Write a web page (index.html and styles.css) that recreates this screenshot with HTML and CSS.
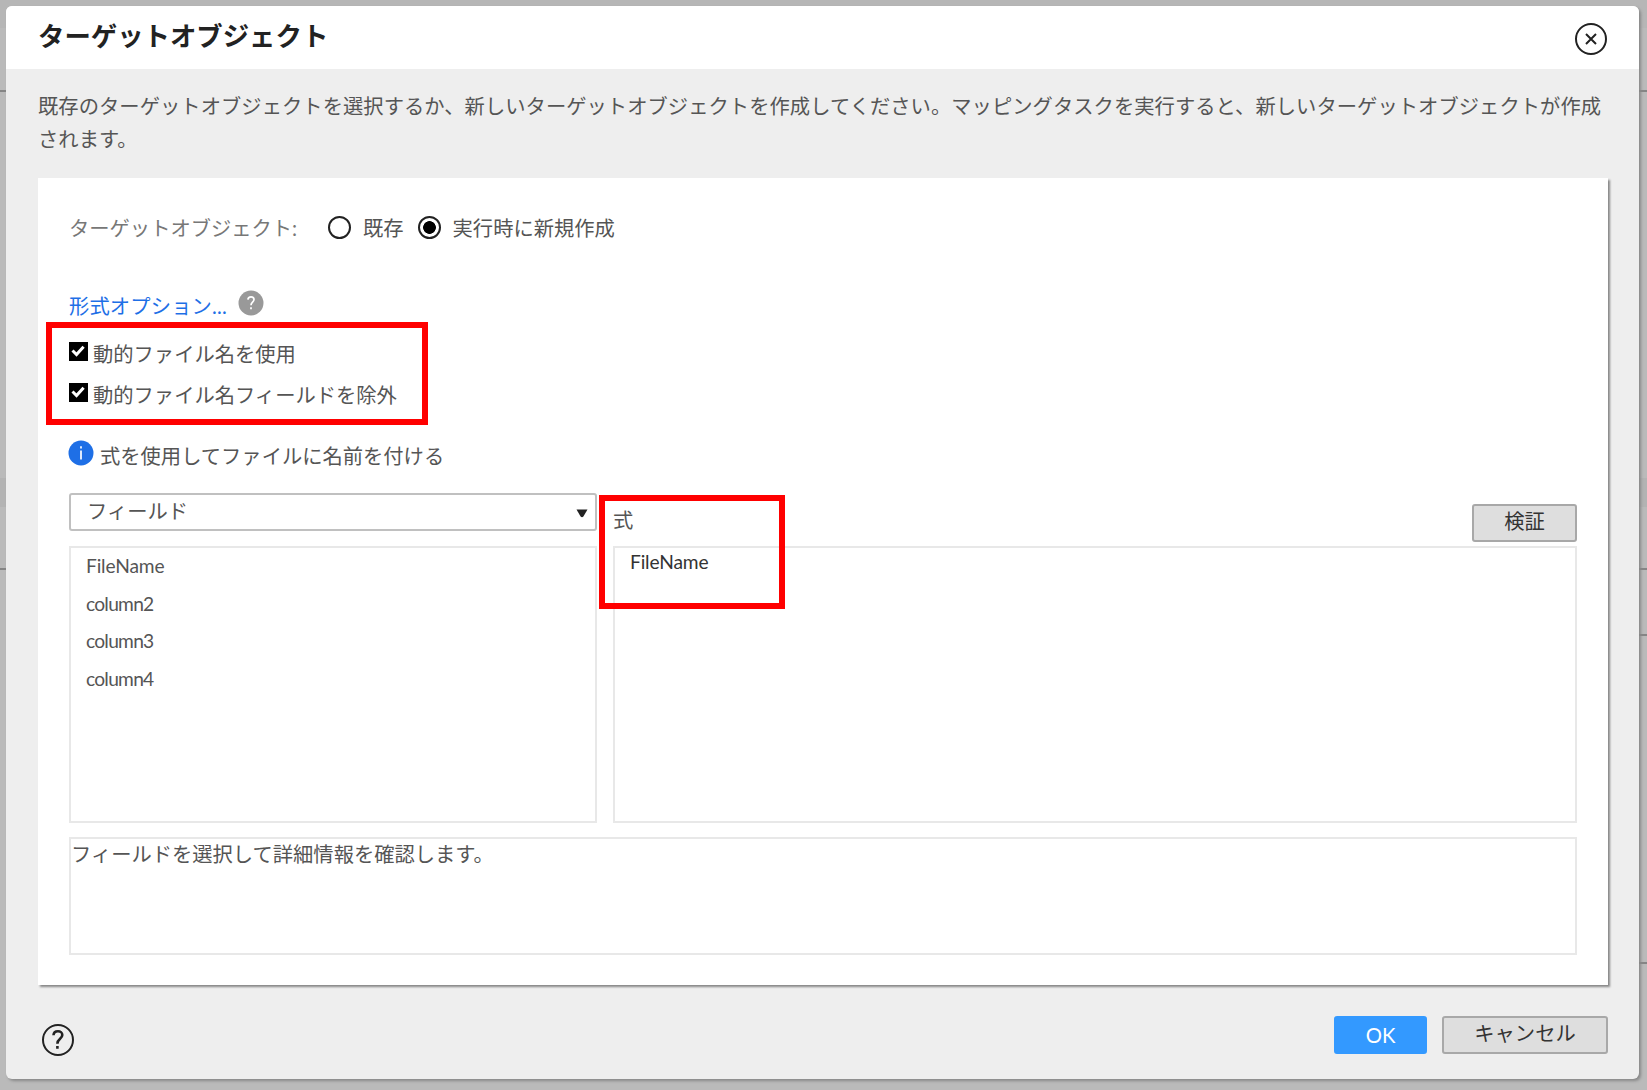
FILE: index.html
```html
<!DOCTYPE html>
<html lang="ja">
<head>
  <meta charset="UTF-8">
  <meta name="viewport" content="width=device-width, initial-scale=1.0">
  <title>ターゲットオブジェクト</title>
  <link rel="stylesheet" href="styles.css">
</head>
<body>
  <div class="dialog">
    <header class="dialog-header">
      <h1>ターゲットオブジェクト</h1>
      <svg class="round-icon" viewBox="0 0 34 34">
        <circle cx="17" cy="17" r="15" />
        <path d="M12 12L22 22M22 12L12 22" />
      </svg>
    </header>

    <p class="intro">既存のターゲットオブジェクトを選択するか、新しいターゲットオブジェクトを作成してください。マッピングタスクを実行すると、新しいターゲットオブジェクトが作成<br>されます。</p>

    <main class="panel">
      <div class="target-row">
        <span class="target-label">ターゲットオブジェクト:</span>
        <label class="radio"><span class="radio-dot"></span>既存</label>
        <label class="radio"><span class="radio-dot checked"></span>実行時に新規作成</label>
      </div>

      <div class="format-row">
        <a href="#">形式オプション...</a>
        <svg class="badge-icon" viewBox="0 0 26 26">
          <circle cx="13" cy="13" r="12.5" fill="#999" />
          <path d="M9.9 9.6C10.2 5.8 16 5.9 16 9.6C16 12.2 13 12.2 13 15.2M13 17.3V19.2" fill="none" stroke="#fff" stroke-width="1.7" />
        </svg>
      </div>

      <div class="checks">
        <label class="check">
          <svg viewBox="0 0 19 19"><rect width="19" height="19" /><path d="M3.5 8.5L7.5 12.5L14.6 4.7" /></svg>
          動的ファイル名を使用
        </label>
        <label class="check">
          <svg viewBox="0 0 19 19"><rect width="19" height="19" /><path d="M3.5 8.5L7.5 12.5L14.6 4.7" /></svg>
          動的ファイル名フィールドを除外
        </label>
        <div class="highlight highlight-checks"></div>
      </div>

      <div class="info-row">
        <svg class="badge-icon" viewBox="0 0 26 26">
          <circle cx="13" cy="13" r="12.5" fill="#1e6fe6" />
          <path d="M13 6.3V8.4M13 10.5V19.5" stroke="#fff" stroke-width="1.7" />
        </svg>
        <span>式を使用してファイルに名前を付ける</span>
      </div>

      <div class="editor">
        <div class="fields">
          <div class="select">
            <span>フィールド</span>
            <svg viewBox="0 0 12 9"><path d="M0.5 0.5H11.5L7.4 7.6Q6 9 4.6 7.6Z" /></svg>
          </div>
          <ul class="box field-list">
            <li>FileName</li>
            <li class="column">column2</li>
            <li class="column">column3</li>
            <li class="column">column4</li>
          </ul>
        </div>
        <div class="expression">
          <div class="expression-head">
            <span>式</span>
            <button class="btn btn-verify">検証</button>
          </div>
          <div class="box expression-text">FileName</div>
          <div class="highlight highlight-expression"></div>
        </div>
      </div>

      <div class="box detail">フィールドを選択して詳細情報を確認します。</div>
    </main>

    <footer class="dialog-footer">
      <svg class="round-icon" viewBox="0 0 34 34">
        <circle cx="17" cy="17" r="15" />
        <path class="question" d="M12.5 12.3C12.8 6.8 21.3 7.2 21.3 12C21.3 16 16.4 15.6 16.4 20.7M16.4 23V25.7" />
      </svg>
      <button class="btn btn-ok">OK</button>
      <button class="btn btn-cancel">キャンセル</button>
    </footer>
  </div>
</body>
</html>
```

FILE: styles.css
```css
* {
  box-sizing: border-box;
}
body {
  margin: 0;
  height: 1090px;
  padding: 6px 8px 11px 6px;
  overflow: hidden;
  /* dimmed page behind the dialog */
  background:
    linear-gradient(#858585, #858585) 0 90px / 100% 2px no-repeat,
    linear-gradient(#858585, #858585) 0 568px / 100% 2px no-repeat,
    linear-gradient(#858585, #858585) 100% 634px / 9px 2px no-repeat,
    linear-gradient(#858585, #858585) 100% 962px / 9px 2px no-repeat,
    linear-gradient(#b3b3b3, #b3b3b3) 0 478px / 100% 29px no-repeat,
    linear-gradient(#b6b6b6, #b6b6b6) 0 0 / 100% 28px no-repeat,
    #bababa;
  font-family: Lato, "Noto Sans CJK JP", sans-serif;
  font-size: 20.3px;
  line-height: 32px;
  color: #555;
}
.dialog {
  height: 1073px;
  display: flex;
  flex-direction: column;
  background: #eee;
  border-radius: 6px;
  box-shadow: 2px 2px 3px #888;
  overflow: hidden;
}
.dialog-header {
  height: 63px;
  flex: none;
  display: flex;
  justify-content: space-between;
  align-items: center;
  padding: 2px 31px 0 32px;
  background: #fff;
}
h1 {
  margin: -5px 0 0;
  font-size: 26.4px;
  color: #222;
}
.round-icon {
  width: 34px;
  height: 34px;
  fill: none;
  stroke: #222;
  stroke-width: 2;
}
.round-icon .question {
  stroke-width: 2.6;
}
.intro {
  flex: none;
  margin: 0;
  padding: 21px 0 0 32px;
  height: 109px;
  line-height: 33px;
  letter-spacing: 0.05px;
  white-space: nowrap;
}
.panel {
  width: 1570px;
  height: 807px;
  flex: none;
  margin-left: 32px;
  padding: 34px 31px 0;
  background: #fff;
  box-shadow: 2px 2px 2px #888;
}
.target-row {
  display: flex;
  align-items: center;
}
.target-label {
  width: 259px;
  color: #777;
}
.radio {
  display: flex;
  align-items: center;
  margin-right: 14px;
}
.radio-dot {
  width: 23px;
  height: 23px;
  margin: -1px 12px 0 0;
  border: 2px solid #222;
  border-radius: 50%;
}
.radio-dot.checked {
  background: radial-gradient(circle, #000 6px, transparent 6.7px);
}
.format-row {
  display: flex;
  margin-top: 46px;
  height: 32px;
}
.format-row a {
  width: 169px;
  letter-spacing: 0.15px;
  color: #1e6fe6;
  text-decoration: none;
}
.badge-icon {
  width: 26px;
  height: 26px;
}
.checks {
  position: relative;
  margin-top: 16px;
}
.check {
  display: flex;
  height: 40.5px;
}
.check svg {
  width: 19px;
  height: 19px;
  margin: 4px 5px 0 0;
}
.check path {
  fill: none;
  stroke: #fff;
  stroke-width: 3;
}
.info-row {
  display: flex;
  gap: 6px;
  margin-top: 21px;
  height: 34px;
}
.info-row .badge-icon {
  margin-left: -1px;
}
.highlight {
  position: absolute;
  border: 6px solid #f00;
}
.highlight-checks {
  left: -23px;
  top: -16px;
  width: 382px;
  height: 103px;
}
.highlight-expression {
  left: -14px;
  top: 2px;
  width: 186px;
  height: 114px;
}
.editor {
  display: flex;
  gap: 16px;
  margin-top: 19px;
}
.fields {
  width: 528px;
}
.select {
  height: 38px;
  display: flex;
  justify-content: space-between;
  padding: 0 7px 0 16px;
  border: 2px solid #c0c0c0;
  border-radius: 3px;
}
.select svg {
  width: 12px;
  height: 9px;
  margin-top: 14px;
  fill: #222;
}
.box {
  border: 2px solid #e8e8e8;
}
.field-list {
  height: 277px;
  margin: 15px 0 0;
  padding: 0 15px;
  list-style: none;
  font-size: 19.2px;
  letter-spacing: -0.15px;
}
.field-list li {
  height: 37.5px;
  line-height: 36px;
}
.field-list .column {
  letter-spacing: -0.75px;
}
.expression {
  position: relative;
  flex: 1;
}
.expression-head {
  height: 53px;
  display: flex;
  justify-content: space-between;
  padding-top: 11px;
}
.expression-text {
  height: 277px;
  padding: 0 15px;
  font-size: 19.2px;
  letter-spacing: -0.15px;
  line-height: 28px;
  color: #333;
}
.detail {
  height: 118px;
  margin-top: 14px;
  padding: 0;
  line-height: 31px;
}
.btn {
  height: 38px;
  padding: 0 0 3px;
  border: 2px solid #a8a8a8;
  border-radius: 3px;
  background: #dedede;
  font: inherit;
  line-height: 31px;
  color: #333;
}
.btn-verify {
  width: 105px;
}
.dialog-footer {
  display: flex;
  align-items: flex-start;
  padding: 31px 31px 0 35px;
}
.dialog-footer .round-icon {
  margin: 7px auto 0 0;
}
.btn-ok {
  width: 93px;
  border-color: #3399ff;
  background: #3399ff;
  color: #fff;
  padding: 0;
}
.btn-cancel {
  width: 166px;
  margin-left: 15px;
}
```
